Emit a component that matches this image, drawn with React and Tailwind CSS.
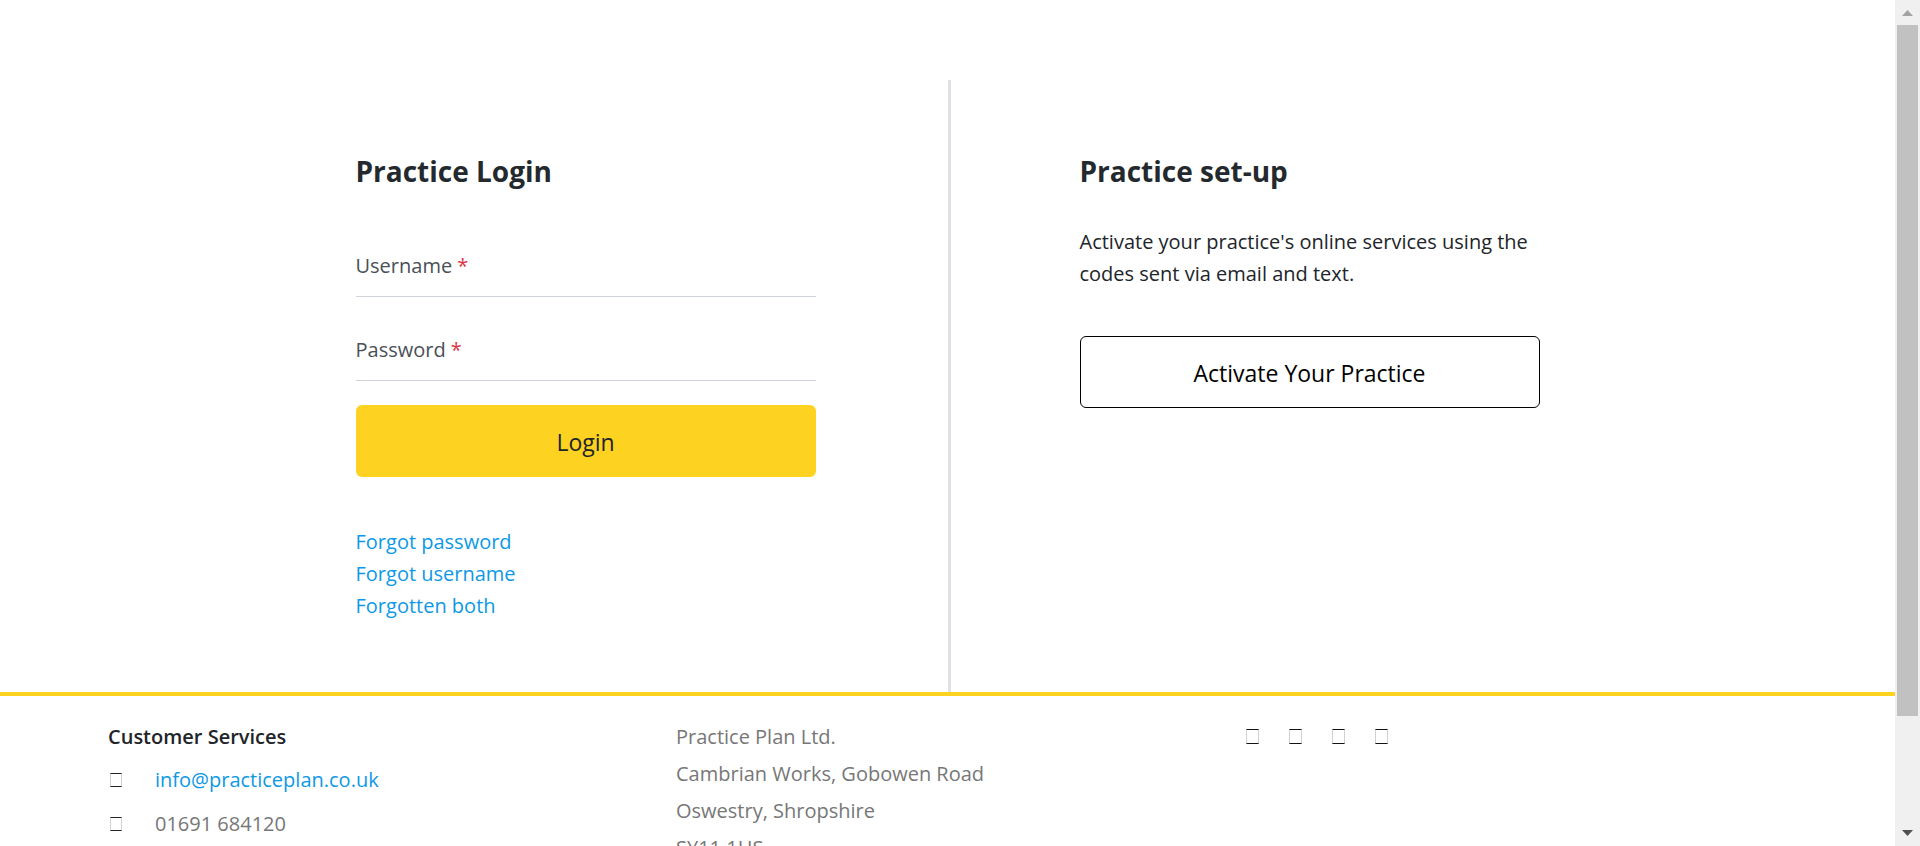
function Field({ id, label, type, autoComplete }) {
  return (
    <div className="grid h-[84px] items-end border-b border-[#ced4da]">
      <input
        id={id}
        type={type}
        autoComplete={autoComplete}
        required
        className="col-start-1 row-start-1 h-12 w-full bg-transparent text-xl text-[#212529] outline-none"
      />
      <label htmlFor={id} className="pointer-events-none col-start-1 row-start-1 pb-[14px] text-[#495057]">
        {label} <span className="text-[#dc3545]">*</span>
      </label>
    </div>
  );
}

function Glyph({ large }) {
  return (
    <span
      aria-hidden="true"
      className={
        large
          ? "block h-[15px] w-[13px] border border-x-[#d0d0d8] border-y-[#111315]"
          : "block h-[14px] w-[12px] border border-x-[#d0d0d8] border-y-[#212529]"
      }
    />
  );
}

const headingClass = "text-[28px] leading-9 font-bold text-[#24292e]";
const footerLine = "h-[37px] leading-8";

function Scrollbar() {
  return (
    <div aria-hidden="true" className="flex w-[25px] shrink-0 flex-col items-center bg-[#f0f0f0]">
      <svg width="25" height="25" viewBox="0 0 25 25" className="shrink-0">
        <path d="M12.5 10 L18 16 H7 Z" fill="#a3a3a3" />
      </svg>
      <div className="w-[21px] grow bg-[#c1c1c1]" />
      <div className="h-[105px] shrink-0" />
      <svg width="25" height="25" viewBox="0 0 25 25" className="shrink-0">
        <path d="M7 9 H18 L12.5 15 Z" fill="#505050" />
      </svg>
    </div>
  );
}

export default function App() {
  return (
    <div className="flex h-screen overflow-hidden bg-white font-['Open_Sans',sans-serif] text-xl leading-8 text-[#212529]">
      <div className="min-w-0 grow overflow-hidden">
        <main className="mx-auto grid max-w-[1448px] grid-cols-2 pt-20">
          <section className="px-[132px] pt-[73px] pb-[70px]">
            <h1 className={headingClass}>Practice Login</h1>
            <form className="pt-6" onSubmit={(event) => event.preventDefault()}>
              <Field id="username" label="Username" type="text" autoComplete="username" />
              <Field id="password" label="Password" type="password" autoComplete="current-password" />
              <button type="submit" className="mt-6 h-[72px] w-full rounded-md bg-[#fdd221] pt-0.5 text-[23px] text-[#212529]">
                Login
              </button>
            </form>
            <nav className="flex flex-col items-start pt-[49px] text-[#0d99e5]">
              <a href="#password-reset">Forgot password</a>
              <a href="#username-reminder">Forgot username</a>
              <a href="#account-recovery">Forgotten both</a>
            </nav>
          </section>
          <section className="border-l-[3px] border-[#dee2e6] pt-[73px] pr-[132px] pl-[129px]">
            <h2 className={headingClass}>Practice set-up</h2>
            <p className="pt-[37px]">
              Activate your practice's online services using the codes sent via email and text.
            </p>
            <button type="button" className="mt-[46px] h-[72px] w-full rounded-md border border-black pt-0.5 text-[23px] text-black">
              Activate Your Practice
            </button>
          </section>
        </main>
        <footer className="grid grid-cols-[568px_570px_1fr] border-t-4 border-[#fdd221] pt-[25px] pl-[108px] text-[#777]">
          <section>
            <h3 className="font-semibold text-[#212529]">Customer Services</h3>
            <ul className="flex flex-col gap-3 pt-[11px]">
              <li className="flex items-center gap-[33px] pl-0.5">
                <Glyph />
                <a href="mailto:info@practiceplan.co.uk" className="text-[#0d99e5]">
                  info@practiceplan.co.uk
                </a>
              </li>
              <li className="flex items-center gap-[33px] pl-0.5">
                <Glyph />
                <span>01691 684120</span>
              </li>
            </ul>
          </section>
          <address className="not-italic">
            <p className={footerLine}>Practice Plan Ltd.</p>
            <p className={footerLine}>Cambrian Works, Gobowen Road</p>
            <p className={footerLine}>Oswestry, Shropshire</p>
            <p className={footerLine}>SY11 1HS</p>
          </address>
          <nav className="flex h-[30px] items-center gap-[30px]">
            <a href="#facebook" aria-label="Facebook"><Glyph large /></a>
            <a href="#twitter" aria-label="Twitter"><Glyph large /></a>
            <a href="#linkedin" aria-label="LinkedIn"><Glyph large /></a>
            <a href="#youtube" aria-label="YouTube"><Glyph large /></a>
          </nav>
        </footer>
      </div>
      <Scrollbar />
    </div>
  );
}
